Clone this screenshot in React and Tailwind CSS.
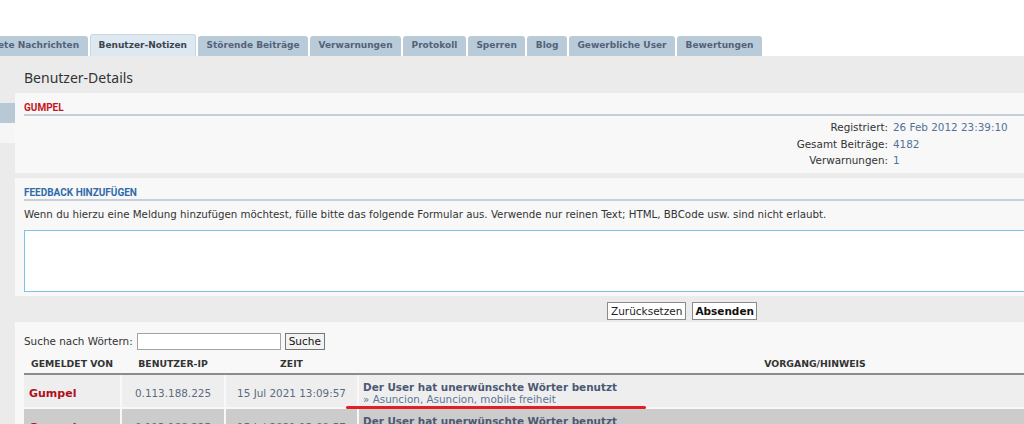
import React from 'react';

const tabs = [
  'Gemeldete Nachrichten',
  'Benutzer-Notizen',
  'Störende Beiträge',
  'Verwarnungen',
  'Protokoll',
  'Sperren',
  'Blog',
  'Gewerbliche User',
  'Bewertungen',
];

const rows = [
  {
    user: 'Gumpel',
    ip: '0.113.188.225',
    time: '15 Jul 2021 13:09:57',
    title: 'Der User hat unerwünschte Wörter benutzt',
    words: '» Asuncion, Asuncion, mobile freiheit',
    bg: 'bg-[#eeeeee]',
  },
  {
    user: 'Gumpel',
    ip: '0.113.188.225',
    time: '15 Jul 2021 13:09:57',
    title: 'Der User hat unerwünschte Wörter benutzt',
    words: '» Asuncion, Asuncion, mobile freiheit',
    bg: 'bg-[#cccccc]',
  },
];

const SectionTitle = ({ children, red }) => (
  <div
    className={`leading-[12px] border-b-2 border-[#c5ced9] font-['Roboto',sans-serif] font-bold text-[10px] ${
      red ? 'text-[#c4161c]' : 'text-[#2f6aa8]'
    }`}
  >
    {children}
  </div>
);

export default function App() {
  return (
    <div className="w-[1024px] h-[424px] overflow-hidden bg-white font-['DejaVu_Sans',sans-serif] text-[10.4px] text-[#333]">
      <div className="w-[1349px] relative">
        {/* tabs */}
        <div className="h-[56px] flex items-end gap-[2px] ml-[-49px]">
          {tabs.map((t) =>
            t === 'Benutzer-Notizen' ? (
              <div
                key={t}
                className="h-[22px] px-[8px] flex items-center rounded-t-[3px] bg-[#dde8f1] border border-b-0 border-[#c9d7e3] font-bold text-[9px] text-[#3c4450]"
              >
                {t}
              </div>
            ) : (
              <div
                key={t}
                className="h-[20px] px-[8.5px] flex items-center rounded-t-[3px] bg-[#b9cbd9] font-bold text-[9px] text-[#52627a]"
              >
                {t}
              </div>
            )
          )}
        </div>

        <div className="flex bg-[#ebebeb]">
          {/* left strip */}
          <div className="w-[15px] shrink-0 flex flex-col">
            <div className="h-[47px]" />
            <div className="h-[20px] bg-[#b7c8d6]" />
            <div className="h-[20px] bg-[#f6f6f6]" />
          </div>

          {/* main column */}
          <div className="w-[1334px] flex flex-col">
            <div className="h-[37px] flex items-center pt-[6px] px-[9px] font-['Noto_Sans',sans-serif] text-[14px] text-[#333]">
              Benutzer-Details
            </div>

            {/* user box */}
            <div className="h-[80px] bg-[#f8f8f8] px-[9px] pt-[9px]">
              <SectionTitle red>GUMPEL</SectionTitle>
              <div className="grid grid-cols-[864px_auto] gap-x-[5px] gap-y-[4px] mt-[5px] leading-[12.5px]">
                <div className="text-right">Registriert:</div>
                <div className="text-[#557197]">26 Feb 2012 23:39:10</div>
                <div className="text-right">Gesamt Beiträge:</div>
                <div className="text-[#557197]">4182</div>
                <div className="text-right">Verwarnungen:</div>
                <div className="text-[#557197]">1</div>
              </div>
            </div>

            {/* feedback */}
            <div className="mt-[5px] h-[118px] bg-[#f8f8f8] px-[9px] pt-[9px]">
              <SectionTitle>FEEDBACK HINZUFÜGEN</SectionTitle>
              <div className="mt-[6px] leading-[14px] text-[10.28px]">
                Wenn du hierzu eine Meldung hinzufügen möchtest, fülle bitte das folgende Formular aus. Verwende nur reinen Text; HTML, BBCode usw. sind nicht erlaubt.
              </div>
              <div className="mt-[9px] h-[62px] bg-white border border-[#7cc2ec]" />
            </div>

            {/* buttons */}
            <div className="h-[26px] flex items-start pt-[6px] justify-center gap-[6px]">
              <button className="h-[18px] px-[3px] bg-white border border-[#8a8a8a] text-[10.5px] text-[#222] leading-none">
                Zurücksetzen
              </button>
              <button className="h-[18px] px-[2px] bg-white border border-[#8a8a8a] text-[10.5px] font-bold text-[#111] leading-none">
                Absenden
              </button>
            </div>

            {/* reports */}
            <div className="h-[120px] bg-[#f8f8f8] px-[9px] pt-[11px]">
              <div className="flex items-center gap-[4px]">
                <span>Suche nach Wörtern:</span>
                <div className="w-[144px] h-[17px] bg-white border border-[#a3a3a3]" />
                <button className="h-[17px] px-[3px] bg-[#f3f3f3] border border-[#777] text-[10.5px] text-[#111] leading-none">
                  Suche
                </button>
              </div>

              <div className="mt-[2px] grid grid-cols-[96px_102px_131px_912px_1fr] gap-x-[2px] h-[21px] pt-[3px] items-center font-bold text-[9.3px] text-[#333] text-center">
                <div>GEMELDET VON</div>
                <div>BENUTZER-IP</div>
                <div>ZEIT</div>
                <div>VORGANG/HINWEIS</div>
                <div />
              </div>
              <div className="border-t-2 border-[#8c8c8c] flex flex-col gap-[2px]">
                {rows.map((r, i) => (
                  <div key={i} className="grid grid-cols-[96px_102px_131px_1fr] gap-x-[2px] h-[32px]">
                    <div className={`${r.bg} flex items-center pt-[6px] px-[5px] font-bold text-[11px] text-[#b0101a]`}>{r.user}</div>
                    <div className={`${r.bg} flex items-center pt-[5px] justify-center text-[#5b6b80]`}>{r.ip}</div>
                    <div className={`${r.bg} flex items-center pt-[5px] justify-center text-[#5b6b80]`}>{r.time}</div>
                    <div className={`${r.bg} flex flex-col justify-center pt-[4px] px-[4px] leading-[12.5px]`}>
                      <span className="font-bold text-[#4b5873]">{r.title}</span>
                      <span className="text-[#5f7595]">{r.words}</span>
                    </div>
                  </div>
                ))}
              </div>
            </div>
          </div>
        </div>

        {/* red annotation stroke */}
        <div className="absolute left-[346px] top-[406px] w-[300px] h-[3px] rounded-full bg-[#e31e24]" />
      </div>
    </div>
  );
}
